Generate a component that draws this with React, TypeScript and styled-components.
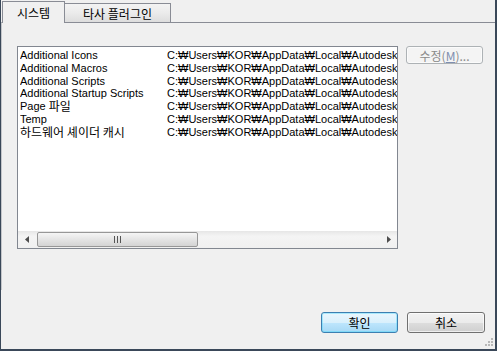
import React, { FC } from "react";
import styled, { createGlobalStyle } from "styled-components";

const GlobalStyle = createGlobalStyle`
  html, body {
    margin: 0;
    padding: 0;
    background: #f0f0f0;
  }
  * {
    box-sizing: border-box;
  }
`;

const UI_FONT = `"Liberation Sans", "Noto Sans CJK KR", sans-serif`;
const KR_FONT = `"Noto Sans CJK KR", "Liberation Sans", sans-serif`;

const StyledWindow = styled.div`
  position: relative;
  width: 497px;
  height: 351px;
  display: flex;
  flex-direction: column;
  background: #f0f0f0;
  border-left: 1px solid #3a4859;
  border-right: 2px solid #3a4859;
  border-bottom: 2px solid #3a4859;
  font-family: ${UI_FONT};
  color: #000;
  overflow: hidden;
`;

const StyledTabStrip = styled.div`
  height: 22px;
  display: flex;
  align-items: flex-end;
  padding-left: 1px;
`;

const StyledTab = styled.div<{ $active?: boolean }>`
  position: relative;
  z-index: 1;
  display: flex;
  align-items: center;
  justify-content: center;
  font-family: ${KR_FONT};
  font-size: 12px;
  border: 1px solid #898c95;
  border-bottom: none;
  height: ${(p) => (p.$active ? "22px" : "19px")};
  margin-bottom: ${(p) => (p.$active ? "-1px" : "0")};
  padding-top: ${(p) => (p.$active ? "0" : "1px")};
  border-left: ${(p) => (p.$active ? "1px solid #898c95" : "none")};
  background: ${(p) =>
    p.$active ? "#f0f0f0" : "linear-gradient(#f3f3f3, #ebebeb 50%, #dddddd)"};
`;

const StyledPanel = styled.div`
  flex: 1;
  display: flex;
  gap: 8px;
  padding: 23px 0 0 15px;
  border-top: 1px solid #898c95;
  border-left: 1px solid #c4c6ca;
`;

const StyledListBox = styled.div`
  width: 381px;
  height: 203px;
  display: flex;
  flex-direction: column;
  background: #fff;
  border: 1px solid #828790;
`;

const StyledRows = styled.div`
  flex: 1;
  padding-top: 2px;
  overflow: hidden;
`;

const StyledRow = styled.div`
  display: grid;
  grid-template-columns: 147px 1fr;
  height: 12.8px;
  line-height: 13px;
  padding-left: 2px;
  font-size: 11px;
  white-space: nowrap;
`;

const StyledName = styled.span`
  overflow: hidden;
  color: #000;
`;

const StyledKr = styled.span`
  display: inline-block;
  vertical-align: top;
  margin-top: -1px;
  height: 13px;
  line-height: 13px;
  font-family: ${KR_FONT};
  font-size: 12px;
`;

const StyledPath = styled.span`
  overflow: hidden;
`;

const StyledScrollBar = styled.div`
  height: 17px;
  display: flex;
  align-items: stretch;
  background: linear-gradient(#e6e6e6, #f4f4f4 30%, #f0f0f0);
`;

const StyledArrow = styled.div`
  width: 17px;
  display: flex;
  align-items: center;
  justify-content: center;
`;

const StyledTrack = styled.div`
  flex: 1;
  display: flex;
  padding: 1px 2px;
`;

const StyledThumb = styled.div`
  width: 161px;
  display: flex;
  align-items: center;
  justify-content: center;
  border: 1px solid #979797;
  border-radius: 2px;
  background: linear-gradient(#f5f5f5, #e6e6e6 45%, #d4d4d4);
`;

const StyledSide = styled.div`
  display: flex;
  flex-direction: column;
`;

const StyledButton = styled.button<{ $primary?: boolean; $disabled?: boolean }>`
  font-family: ${KR_FONT};
  font-size: 12px;
  padding: 0;
  display: flex;
  align-items: center;
  justify-content: center;
  border-radius: 3px;
  cursor: default;
  color: ${(p) => (p.$disabled ? "#8a8a8a" : "#000")};
  border: 1px solid
    ${(p) => (p.$primary ? "#3c7fb1" : p.$disabled ? "#adb2b5" : "#707070")};
  background: ${(p) =>
    p.$primary
      ? "linear-gradient(#eaf6fd, #d9f0fc 50%, #bee6fd 51%, #a7d9f5)"
      : p.$disabled
      ? "#f4f4f4"
      : "linear-gradient(#f2f2f2, #ebebeb 50%, #dddddd 51%, #cfcfcf)"};
  box-shadow: ${(p) =>
    p.$primary ? "inset 0 0 0 1px #48d7fb66" : "inset 0 0 0 1px #ffffffaa"};
`;

const StyledEditButton = styled(StyledButton)`
  width: 77px;
  height: 18px;
  u {
    color: #7f8fb0;
  }
`;

const StyledFooter = styled.div`
  display: flex;
  justify-content: flex-end;
  gap: 9px;
  padding: 22px 10px 16px 0;
`;

const StyledDialogButton = styled(StyledButton)`
  width: 77px;
  height: 21px;
`;

const StyledGrip = styled.svg`
  position: absolute;
  right: 2px;
  bottom: 1px;
`;

const PATH = "C:₩Users₩KOR₩AppData₩Local₩Autodesk₩3dsMax₩2012";

const rows: React.ReactNode[] = [
  "Additional Icons",
  "Additional Macros",
  "Additional Scripts",
  "Additional Startup Scripts",
  <>
    Page <StyledKr>파일</StyledKr>
  </>,
  "Temp",
  <StyledKr>하드웨어 셰이더 캐시</StyledKr>,
];

const App: FC = () => {
  return (
    <StyledWindow>
      <GlobalStyle />
      <StyledTabStrip>
        <StyledTab $active style={{ width: 63 }}>
          시스템
        </StyledTab>
        <StyledTab style={{ width: 106 }}>타사 플러그인</StyledTab>
      </StyledTabStrip>
      <StyledPanel>
        <StyledListBox>
          <StyledRows>
            {rows.map((name, i) => (
              <StyledRow key={`row_${i}`}>
                <StyledName>{name}</StyledName>
                <StyledPath>{PATH}</StyledPath>
              </StyledRow>
            ))}
          </StyledRows>
          <StyledScrollBar>
            <StyledArrow>
              <svg width="4" height="7" viewBox="0 0 4 7">
                <path d="M4 0 L0 3.5 L4 7 Z" fill="#4d4d4d" />
              </svg>
            </StyledArrow>
            <StyledTrack>
              <StyledThumb>
                <svg width="7" height="7" viewBox="0 0 7 7">
                  <path d="M0.5 0v7M3.5 0v7M6.5 0v7" stroke="#555" />
                </svg>
              </StyledThumb>
            </StyledTrack>
            <StyledArrow>
              <svg width="4" height="7" viewBox="0 0 4 7">
                <path d="M0 0 L4 3.5 L0 7 Z" fill="#4d4d4d" />
              </svg>
            </StyledArrow>
          </StyledScrollBar>
        </StyledListBox>
        <StyledSide>
          <StyledEditButton $disabled>
            수정(<u>M</u>)...
          </StyledEditButton>
        </StyledSide>
      </StyledPanel>
      <StyledFooter>
        <StyledDialogButton $primary>확인</StyledDialogButton>
        <StyledDialogButton style={{ width: 78 }}>취소</StyledDialogButton>
      </StyledFooter>
      <StyledGrip width="10" height="10" viewBox="0 0 10 10">
        {[
          [8, 0],
          [8, 3],
          [5, 3],
          [8, 6],
          [5, 6],
          [2, 6],
        ].map(([x, y]) => (
          <rect key={`${x}_${y}`} x={x} y={y} width="2" height="2" fill="#b8b8b8" />
        ))}
      </StyledGrip>
    </StyledWindow>
  );
};

export default App;
